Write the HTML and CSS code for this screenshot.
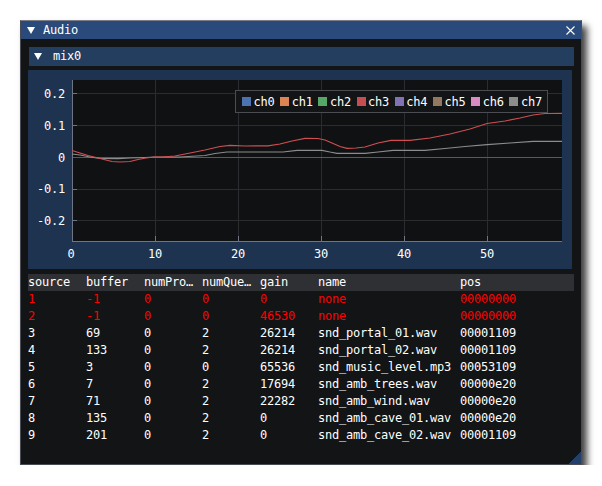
FILE: index.html
```html
<!DOCTYPE html>
<html>
<head>
<meta charset="utf-8">
<link rel="stylesheet" href="styles.css">
</head>
<body>
<div class="window">
  <div class="titlebar">
    <svg class="tri" width="8" height="7" viewBox="0 0 8 7"><polygon points="0,0 8,0 4,7" fill="#fff"/></svg>
    <span class="title">Audio</span>
    <svg class="close" width="9" height="9" viewBox="0 0 9 9"><path d="M0.5 0.5 L8.5 8.5 M8.5 0.5 L0.5 8.5" stroke="#fff" stroke-width="1.1" fill="none"/></svg>
  </div>
  <div class="content">
    <div class="header">
      <svg class="tri" width="8" height="7" viewBox="0 0 8 7"><polygon points="0,0 8,0 4,7" fill="#fff"/></svg>
      <span class="hlabel">mix0</span>
    </div>
    <div class="frame">
      <svg class="plot" width="544" height="199" viewBox="28 70 544 199">
        <rect x="72" y="80" width="490" height="162" fill="#101113"/>
        <g stroke="#2a2c30" stroke-width="1" shape-rendering="crispEdges">
          <line x1="155" y1="80" x2="155" y2="242"/>
          <line x1="238" y1="80" x2="238" y2="242"/>
          <line x1="321" y1="80" x2="321" y2="242"/>
          <line x1="404" y1="80" x2="404" y2="242"/>
          <line x1="487" y1="80" x2="487" y2="242"/>
          <line x1="72" y1="93.5" x2="562" y2="93.5"/>
          <line x1="72" y1="125.5" x2="562" y2="125.5"/>
          <line x1="72" y1="189.5" x2="562" y2="189.5"/>
          <line x1="72" y1="220.5" x2="562" y2="220.5"/>
        </g>
        <line x1="72" y1="157.5" x2="562" y2="157.5" stroke="#595a5e" stroke-width="1" shape-rendering="crispEdges"/>
        <g stroke="#6e7584" stroke-width="1" shape-rendering="crispEdges">
          <line x1="72.5" y1="80" x2="72.5" y2="242"/>
          <line x1="72" y1="241.5" x2="562" y2="241.5"/>
          <line x1="155" y1="236" x2="155" y2="242"/>
          <line x1="238" y1="236" x2="238" y2="242"/>
          <line x1="321" y1="236" x2="321" y2="242"/>
          <line x1="404" y1="236" x2="404" y2="242"/>
          <line x1="487" y1="236" x2="487" y2="242"/>
          <line x1="72" y1="93.5" x2="77" y2="93.5"/>
          <line x1="72" y1="125.5" x2="77" y2="125.5"/>
          <line x1="72" y1="189.5" x2="77" y2="189.5"/>
          <line x1="72" y1="220.5" x2="77" y2="220.5"/>
        </g>
        <polyline fill="none" stroke="#8c8c8c" stroke-width="1.2" points="72,154 80,155 90,157 100,158.3 118,158.7 130,158 145,157.5 155,157 180,157 205,155.5 215,153.5 227,152 283,152 297,150.3 322,150.3 330,152 337,153.3 365,153.3 378,152 393,150.3 425,150.3 445,148.5 465,146.5 487,144.7 510,143 533,141.3 562,141.3"/>
        <polyline fill="none" stroke="#d04e52" stroke-width="1.2" points="72,150.5 80,153 88,155.5 96,157.5 104,159.5 112,161.5 120,162 130,161.5 138,159.5 146,158 154,157 162,157 175,156 190,153 205,150 220,146.5 230,145.3 245,146 268,145.8 280,144 292,141 305,138.3 318,138.5 325,140 332,143 340,146.5 347,148.3 356,148 365,147 378,143 391,140.3 410,140.3 430,138 450,134 470,129 487,123.5 505,121 520,118 533,115 545,113.5 562,113.3"/>
        <g class="ticklabel" text-anchor="end">
          <text x="65" y="97.5">0.2</text>
          <text x="65" y="129.5">0.1</text>
          <text x="65" y="161.5">0</text>
          <text x="65" y="193">-0.1</text>
          <text x="65" y="225">-0.2</text>
        </g>
        <g class="ticklabel" text-anchor="middle">
          <text x="71" y="258">0</text>
          <text x="155" y="258">10</text>
          <text x="238" y="258">20</text>
          <text x="321" y="258">30</text>
          <text x="404" y="258">40</text>
          <text x="487" y="258">50</text>
        </g>
      </svg>
      <div class="legend">
        <div class="entry"><span class="sw c0"></span><span>ch0</span></div>
        <div class="entry"><span class="sw c1"></span><span>ch1</span></div>
        <div class="entry"><span class="sw c2"></span><span>ch2</span></div>
        <div class="entry"><span class="sw c3"></span><span>ch3</span></div>
        <div class="entry"><span class="sw c4"></span><span>ch4</span></div>
        <div class="entry"><span class="sw c5"></span><span>ch5</span></div>
        <div class="entry"><span class="sw c6"></span><span>ch6</span></div>
        <div class="entry"><span class="sw c7"></span><span>ch7</span></div>
      </div>
    </div>
    <div class="table">
      <div class="row head">
        <span>source</span><span>buffer</span><span>numPro…</span><span>numQue…</span><span>gain</span><span>name</span><span>pos</span>
      </div>
      <div class="row err">
        <span>1</span><span>-1</span><span>0</span><span>0</span><span>0</span><span>none</span><span>00000000</span>
      </div>
      <div class="row err">
        <span>2</span><span>-1</span><span>0</span><span>0</span><span>46530</span><span>none</span><span>00000000</span>
      </div>
      <div class="row">
        <span>3</span><span>69</span><span>0</span><span>2</span><span>26214</span><span>snd_portal_01.wav</span><span>00001109</span>
      </div>
      <div class="row">
        <span>4</span><span>133</span><span>0</span><span>2</span><span>26214</span><span>snd_portal_02.wav</span><span>00001109</span>
      </div>
      <div class="row">
        <span>5</span><span>3</span><span>0</span><span>0</span><span>65536</span><span>snd_music_level.mp3</span><span>00053109</span>
      </div>
      <div class="row">
        <span>6</span><span>7</span><span>0</span><span>2</span><span>17694</span><span>snd_amb_trees.wav</span><span>00000e20</span>
      </div>
      <div class="row">
        <span>7</span><span>71</span><span>0</span><span>2</span><span>22282</span><span>snd_amb_wind.wav</span><span>00000e20</span>
      </div>
      <div class="row">
        <span>8</span><span>135</span><span>0</span><span>2</span><span>0</span><span>snd_amb_cave_01.wav</span><span>00000e20</span>
      </div>
      <div class="row">
        <span>9</span><span>201</span><span>0</span><span>2</span><span>0</span><span>snd_amb_cave_02.wav</span><span>00001109</span>
      </div>
    </div>
  </div>
  <div class="grip"></div>
</div>
</body>
</html>
```
FILE: styles.css
```css
html, body {
  margin: 0;
  padding: 0;
  background: #ffffff;
}
body {
  padding: 20px 0 0 20px;
  font-family: "DejaVu Sans Mono", "Liberation Mono", monospace;
  font-size: 12px;
  letter-spacing: -0.22px;
  color: #ffffff;
}
.window {
  position: relative;
  width: 562px;
  height: 445px;
  box-sizing: border-box;
  background: #121415;
  border: 1px solid #4a4c55;
  border-top-color: #7c7f88;
  box-shadow: 5px 6px 7px rgba(0, 0, 0, 0.75);
}
.titlebar {
  height: 18px;
  background: #294a7a;
  display: flex;
  align-items: center;
  padding: 0 6px 0 6px;
}
.titlebar .tri {
  margin-right: 8px;
}
.title {
  flex: 1;
  line-height: 18px;
}
.close {
  display: block;
}
.content {
  padding: 8px 7px 0 7px;
}
.header {
  margin-left: 1px;
  height: 19px;
  background: #233e5e;
  display: flex;
  align-items: center;
  padding-left: 5px;
}
.header .tri {
  margin-right: 11px;
}
.hlabel {
  line-height: 19px;
}
.frame {
  position: relative;
  margin-top: 4px;
  margin-right: 2px;
  height: 199px;
  background: #1e3350;
}
.plot {
  display: block;
}
.ticklabel {
  fill: #ffffff;
  font-family: "DejaVu Sans Mono", "Liberation Mono", monospace;
  font-size: 12px;
  letter-spacing: -0.22px;
}
.legend {
  position: absolute;
  left: 207px;
  top: 20px;
  height: 21px;
  border: 1px solid #4b4c52;
  background: #131416;
  display: flex;
  align-items: center;
  gap: 5.7px;
  padding: 0 5px 0 6px;
}
.entry {
  display: flex;
  align-items: center;
}
.sw {
  width: 9px;
  height: 9px;
  margin-right: 2.5px;
}
.c0 { background: #4c72b0; }
.c1 { background: #dd8452; }
.c2 { background: #55a868; }
.c3 { background: #c44e52; }
.c4 { background: #8172b3; }
.c5 { background: #937860; }
.c6 { background: #da8bc3; }
.c7 { background: #8c8c8c; }
.table {
  margin-top: 5px;
}
.row {
  display: grid;
  grid-template-columns: 58px 58px 58px 58px 58px 142px 1fr;
  height: 17px;
  line-height: 17px;
  white-space: nowrap;
}
.row.head {
  background: #2f3034;
}
.row.err {
  color: #ff0000;
}
.grip {
  position: absolute;
  right: 0;
  bottom: 0;
  width: 13px;
  height: 13px;
  background: linear-gradient(135deg, transparent 50%, #23406a 50%);
}
```
